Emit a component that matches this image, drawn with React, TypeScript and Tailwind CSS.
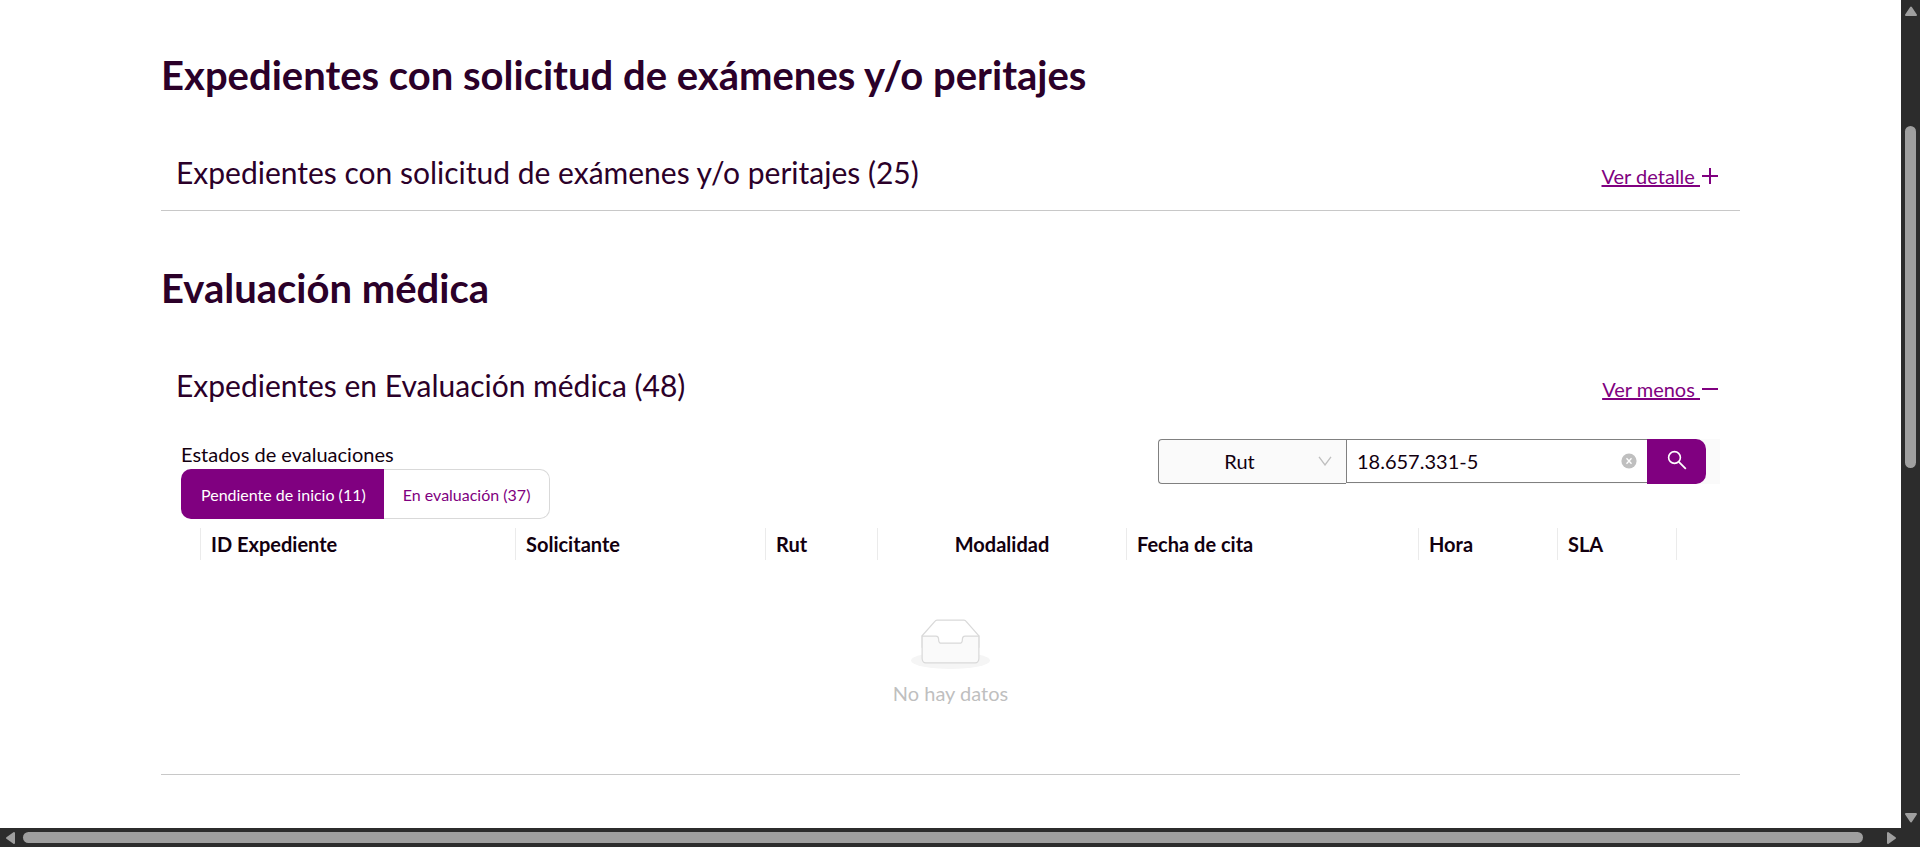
import type { ReactNode } from "react";

function ToggleLink({ label, open }: { label: string; open: boolean }) {
  return (
    <a href="#" className="flex items-center gap-0.5 text-xl leading-7 text-[#800080]">
      <span className="whitespace-pre underline">{label + " "}</span>
      <svg viewBox="0 0 16 16" className="h-4 w-4" fill="currentColor" aria-hidden="true">
        <rect x="0" y="7" width="16" height="2" />
        {!open && <rect x="7" y="0" width="2" height="16" />}
      </svg>
    </a>
  );
}

function Panel({ title, open, children }: { title: string; open: boolean; children?: ReactNode }) {
  return (
    <section className="border-b border-[#c8c8c8]">
      <div className="flex items-center justify-between pr-[22px] pb-px pl-[15px]">
        <h2 className="text-[30px] leading-[74px] text-[#2b0029]">{title}</h2>
        <div className="pt-2">
          <ToggleLink label={open ? "Ver menos" : "Ver detalle"} open={open} />
        </div>
      </div>
      {children}
    </section>
  );
}

function SearchBar() {
  return (
    <form className="flex items-start bg-[#fafafa] pr-3.5" onSubmit={(e) => e.preventDefault()}>
      <div className="relative w-[188px]">
        <select
          aria-label="Buscar por"
          defaultValue="rut"
          className="block h-[45px] w-full appearance-none rounded-l-sm border border-r-0 border-[#808080] bg-[#fafafa] pr-[26px] pb-0.5 text-xl text-[#12000f] [text-align-last:center]"
        >
          <option value="rut">Rut</option>
        </select>
        <svg
          viewBox="0 0 14 10"
          className="pointer-events-none absolute top-[17px] right-3.5 h-2.5 w-3.5"
          fill="none"
          stroke="#bfbfbf"
          strokeWidth="1.3"
          aria-hidden="true"
        >
          <path d="M1 0.8 L7 9 L13 0.8" />
        </svg>
      </div>
      <div className="relative w-[301px]">
        <input
          type="text"
          aria-label="Valor a buscar"
          defaultValue="18.657.331-5"
          className="block h-11 w-full border border-r-0 border-[#808080] bg-white px-2.5 text-xl text-[#12000f] outline-none"
        />
        <button type="button" aria-label="Limpiar" className="absolute top-3.5 right-2.5">
          <svg viewBox="0 0 16 16" className="h-4 w-4" aria-hidden="true">
            <circle cx="8" cy="8" r="7.6" fill="#bfbfbf" />
            <path d="M5.5 5.2 L10.5 10.8 M10.5 5.2 L5.5 10.8" stroke="#fff" strokeWidth="1.3" />
          </svg>
        </button>
      </div>
      <button
        type="submit"
        aria-label="Buscar"
        className="flex h-[45px] w-[59px] items-center justify-center rounded-r-[10px] bg-[#800080] pb-1 text-white"
      >
        <svg viewBox="0 0 20 20" className="h-5 w-5" fill="none" stroke="currentColor" strokeWidth="1.6" aria-hidden="true">
          <circle cx="7.5" cy="7.5" r="5.9" />
          <path d="M11.8 11.8 L18.8 18.8" strokeWidth="1.8" />
        </svg>
      </button>
    </form>
  );
}

function EmptyState() {
  return (
    <div className="flex flex-col items-center text-xl leading-8 text-[#bfbfbf]">
      <svg viewBox="0 0 64 41" preserveAspectRatio="none" className="mb-2 h-[50px] w-[79px]" aria-hidden="true">
        <g transform="translate(0 1)" fill="none" fillRule="evenodd">
          <ellipse fill="#f5f5f5" cx="32" cy="33" rx="32" ry="7" />
          <g fillRule="nonzero" stroke="#d9d9d9">
            <path d="M55 12.76L44.854 1.258C44.367.474 43.656 0 42.907 0H21.093c-.749 0-1.46.474-1.947 1.257L9 12.761V22h46v-9.24z" />
            <path
              d="M41.613 15.931c0-1.605.994-2.93 2.227-2.931H55v18.137C55 33.26 53.68 35 52.05 35h-40.1C10.32 35 9 33.259 9 31.137V13h11.16c1.233 0 2.227 1.323 2.227 2.928v.022c0 1.605 1.005 2.901 2.237 2.901h14.752c1.232 0 2.237-1.308 2.237-2.913v-.007z"
              fill="#fafafa"
            />
          </g>
        </g>
      </svg>
      No hay datos
    </div>
  );
}

const columns = [
  { label: "", width: "w-[20px]", line: true },
  { label: "ID Expediente", width: "w-[315px]", line: true },
  { label: "Solicitante", width: "w-[250px]", line: true },
  { label: "Rut", width: "w-[112px]", line: true },
  { label: "Modalidad", width: "w-[249px]", center: true, line: true },
  { label: "Fecha de cita", width: "w-[292px]", line: true },
  { label: "Hora", width: "w-[139px]", line: true },
  { label: "SLA", width: "w-[119px]", line: true },
  { label: "", width: "w-[43px]", line: false },
];

function ResultsTable() {
  return (
    <table className="w-full table-fixed border-collapse">
      <thead>
        <tr>
          {columns.map((c, i) => (
            <th key={i} scope="col" className={`${c.width} p-0 py-[9px] text-left text-xl font-bold text-[#12000f]`}>
              <div
                className={`h-8 leading-8 ${c.label ? "px-2.5" : ""} ${c.center ? "text-center" : ""} ${
                  c.line ? "border-r border-[#ebebeb]" : ""
                }`}
              >
                {c.label}
              </div>
            </th>
          ))}
        </tr>
      </thead>
      <tbody>
        <tr>
          <td colSpan={9} className="px-0 pt-[50px] pb-[65px]">
            <EmptyState />
          </td>
        </tr>
      </tbody>
    </table>
  );
}

function Arrow({ label, d }: { label: string; d: string }) {
  return (
    <button type="button" aria-label={label} className="h-4 w-4 shrink-0">
      <svg viewBox="0 0 16 16" className="h-4 w-4" fill="#9f9f9f" stroke="#9f9f9f" strokeWidth="2" strokeLinejoin="round" aria-hidden="true">
        <path d={d} />
      </svg>
    </button>
  );
}

export default function App() {
  return (
    <div className="flex h-screen flex-col bg-[#2c2c2c] font-['Lato',sans-serif]">
      <div className="flex min-h-0 flex-1">
        <main className="min-w-0 flex-1 overflow-hidden bg-white px-[161px] pt-[45px]">
          <h1 className="text-[40px] leading-[60px] font-bold text-[#2b0029]">
            Expedientes con solicitud de exámenes y/o peritajes
          </h1>
          <div className="pt-[30px]">
            <Panel title="Expedientes con solicitud de exámenes y/o peritajes (25)" open={false} />
          </div>
          <h1 className="mt-[47px] text-[40px] leading-[60px] font-bold text-[#2b0029]">Evaluación médica</h1>
          <div className="pt-[30px]">
            <Panel title="Expedientes en Evaluación médica (48)" open>
              <div className="px-5 pt-4">
                <div className="flex items-start justify-between">
                  <div className="text-[#12000f]">
                    <p className="text-xl leading-[30px]">Estados de evaluaciones</p>
                    <div className="flex text-base">
                      <button type="button" className="h-[50px] rounded-l-[10px] bg-[#800080] pt-0.5 pr-[18px] pl-5 text-white">
                        Pendiente de inicio (11)
                      </button>
                      <button
                        type="button"
                        className="h-[50px] rounded-r-[10px] border border-l-0 border-[#d9d9d9] bg-white px-[19px] pt-0.5 text-[#800080]"
                      >
                        En evaluación (37)
                      </button>
                    </div>
                  </div>
                  <SearchBar />
                </div>
                <ResultsTable />
              </div>
            </Panel>
          </div>
        </main>
        <div className="flex w-[19px] flex-col items-center justify-between pt-[3px] pb-[2px]">
          <Arrow label="Subir" d="M8 4.5 L13 12 H3 Z" />
          <div className="flex w-[11px] flex-1 flex-col pt-[107px]">
            <div className="h-1/2 rounded-full bg-[#9f9f9f]" />
          </div>
          <Arrow label="Bajar" d="M8 11.5 L13 4 H3 Z" />
        </div>
      </div>
      <div className="flex h-[19px] items-center pr-[21px] pl-[3px]">
        <Arrow label="Izquierda" d="M4 8 L11 3 V13 Z" />
        <div className="mr-[20px] ml-1 h-[11px] flex-1 rounded-full bg-[#9f9f9f]" />
        <Arrow label="Derecha" d="M12 8 L5 3 V13 Z" />
      </div>
    </div>
  );
}
